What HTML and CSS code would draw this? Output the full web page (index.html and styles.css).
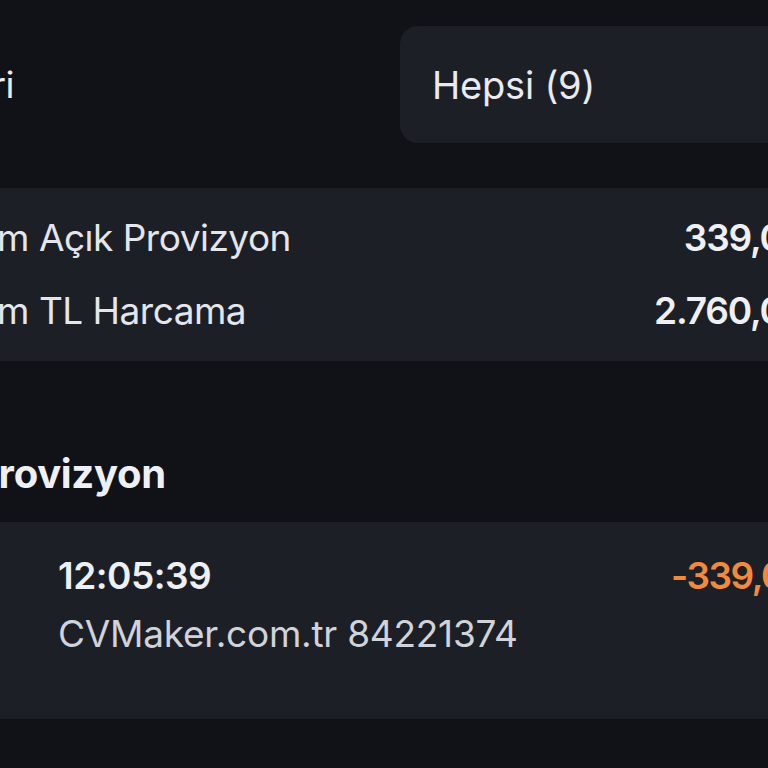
FILE: index.html
```html
<!DOCTYPE html>
<html lang="tr">
<head>
<meta charset="utf-8">
<link rel="stylesheet" href="styles.css">
</head>
<body>
<div class="page">
  <div class="filter-row">
    <div class="filter-label">İşlemleri</div>
    <div class="filter-box">Hepsi (9)</div>
  </div>

  <div class="card summary">
    <div class="sum-row">
      <span class="sum-label">Toplam Açık Provizyon</span>
      <span class="sum-value">339,00 TL</span>
    </div>
    <div class="sum-row">
      <span class="sum-label">Toplam TL Harcama</span>
      <span class="sum-value">2.760,00 TL</span>
    </div>
  </div>

  <h2 class="section-title">Provizyon</h2>

  <div class="card tx">
    <div class="tx-icon"></div>
    <div class="tx-body">
      <div class="tx-time">12:05:39</div>
      <div class="tx-desc">CVMaker.com.tr 84221374</div>
    </div>
    <div class="tx-amount">-339,00 TL</div>
  </div>
</div>
</body>
</html>
```

FILE: styles.css
```css
html, body {
  margin: 0;
  padding: 0;
  background: #111217;
  overflow: hidden;
  width: 768px;
  height: 768px;
}
body {
  font-family: Inter, "Noto Sans", sans-serif;
  color: #eceef3;
  letter-spacing: -0.5px;
}
.page {
  width: 1001px;
  margin-left: -120px;
  padding-top: 26px;
}
.filter-row {
  display: flex;
  align-items: center;
  height: 117px;
}
.filter-label {
  flex: none;
  margin-left: -8px;
  font-size: 37px;
  line-height: 48px;
  color: #eceef3;
}
.filter-box {
  margin-left: auto;
  width: 481px;
  height: 117px;
  box-sizing: border-box;
  background: #1c1f26;
  border-radius: 18px;
  display: flex;
  align-items: center;
  padding-left: 32px;
  font-size: 38px;
  letter-spacing: -0.2px;
  color: #e9ebf0;
}
.card {
  background: #1c1f26;
}
.summary {
  margin-top: 45px;
  padding: 26px 24px;
  display: flex;
  flex-direction: column;
  gap: 25px;
}
.sum-row {
  display: flex;
  justify-content: space-between;
  font-size: 37px;
  line-height: 48px;
}
.sum-label {
  color: #e4e6ec;
}
.sum-value {
  font-weight: 600;
  letter-spacing: -1.2px;
  color: #eef0f5;
}
.section-title {
  margin: 89px 0 24px;
  padding-left: 93px;
  font-size: 40px;
  line-height: 48px;
  font-weight: 700;
  letter-spacing: -0.3px;
  color: #eef0f5;
}
.tx {
  height: 197px;
  box-sizing: border-box;
  padding: 30px 24px 0;
  display: flex;
  align-items: flex-start;
}
.tx-icon {
  width: 154px;
  flex: none;
}
.tx-body {
  display: flex;
  flex-direction: column;
  gap: 10px;
}
.tx-time {
  font-size: 37px;
  line-height: 48px;
  font-weight: 600;
  color: #eef0f5;
}
.tx-desc {
  font-size: 37px;
  line-height: 48px;
  letter-spacing: -0.25px;
  color: #d0d3da;
}
.tx-amount {
  margin-left: auto;
  font-size: 37px;
  line-height: 48px;
  font-weight: 600;
  letter-spacing: -1.5px;
  color: #f28a3d;
}
```
